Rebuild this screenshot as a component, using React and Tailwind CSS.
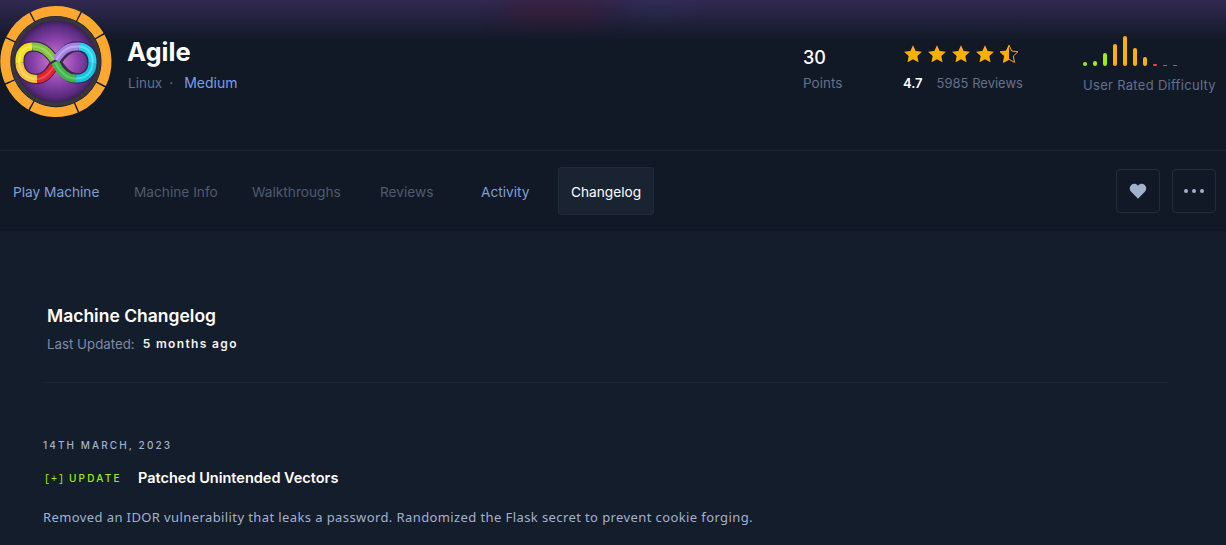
const font = "font-['Inter','Liberation_Sans',sans-serif]";

const STAR = 'M12 1.5l3.2 6.9 7.5.9-5.5 5.2 1.4 7.5L12 18.4l-6.6 3.6 1.4-7.5-5.5-5.2 7.5-.9z';

const bars = [
  { h: 4, c: 'bg-[#9fef00]' },
  { h: 5, c: 'bg-[#9fef00]' },
  { h: 13, c: 'bg-[#9fef00]' },
  { h: 22, c: 'bg-[#ffaf00]' },
  { h: 30, c: 'bg-[#ffaf00]' },
  { h: 18, c: 'bg-[#ffaf00]' },
  { h: 9, c: 'bg-[#ffaf00]' },
  { h: 2, c: 'bg-[#ff3e3e]' },
  { h: 1, c: 'bg-[#ff3e3e]' },
  { h: 1, c: 'bg-[#ff3e3e]' },
];

const tabs = [
  { label: 'Play Machine', c: 'text-[#7f9fd0] w-[125px] pl-[13px]' },
  { label: 'Machine Info', c: 'text-[#4f5a6e] w-[118px] pl-[9px]' },
  { label: 'Walkthroughs', c: 'text-[#4f5a6e] w-[122px] pl-[9px]' },
  { label: 'Reviews', c: 'text-[#4f5a6e] w-[93px] pl-[15px]' },
  { label: 'Activity', c: 'text-[#7f9fd0] w-[100px] pl-[23px]' },
];

// ring gaps read off the reference, degrees clockwise from 12 o'clock
const ringStops = [-28, 27, 60, 117, 156, 209, 246, 295.5, 332];

const infinity = [
  { d: 'M19.5 63C18.5 53 24 46.5 32 46.5', c: '#f2e21c', hi: '#fbf27a' },
  { d: 'M19.5 63C20 73 27 79 37 79', c: '#f9c53c', hi: '#fde08a' },
  { d: 'M32 46.5C42 45.5 49 52 54 60', c: '#86c440', hi: '#b6dd78' },
  { d: 'M37 79C45 79 50 72 54 66', c: '#e3242e', hi: '#f36a70' },
  { d: 'M56 60C62 51 68 45.5 79 46.5', c: '#a583e6', hi: '#d3bff5' },
  { d: 'M55 62C60 72 66 79 76 78.5', c: '#3fb54a', hi: '#7ed586' },
  { d: 'M79 46.5C88 47 93 54 92.5 63', c: '#22d3ee', hi: '#8cecf8' },
  { d: 'M76 78.5C86 79 92.5 72 92.5 63', c: '#12c4dc', hi: '#6fe4f2' },
];

function Logo() {
  const segs = [];
  for (let i = 0; i < 8; i++) {
    const s = ((ringStops[i] - 90 + 0.8) * Math.PI) / 180;
    const e = ((ringStops[i + 1] - 90 - 0.8) * Math.PI) / 180;
    segs.push(
      <path
        key={i}
        d={`M${56 + 50.5 * Math.cos(s)} ${61.5 + 50.5 * Math.sin(s)}A50.5 50.5 0 0 1 ${56 + 50.5 * Math.cos(e)} ${61.5 + 50.5 * Math.sin(e)}`}
        stroke="#fea82f"
        strokeWidth="10"
        fill="none"
      />
    );
  }
  return (
    <svg width="112" height="118" viewBox="0 0 112 118" className="shrink-0">
      <defs>
        <radialGradient id="orb">
          <stop offset="0%" stopColor="#d57fcf" />
          <stop offset="50%" stopColor="#8c44ac" />
          <stop offset="82%" stopColor="#5c2b80" />
          <stop offset="100%" stopColor="#2c1d44" />
        </radialGradient>
      </defs>
      {segs}
      <circle cx="56" cy="61.5" r="43" fill="url(#orb)" stroke="#37363b" strokeWidth="4" />
      <g fill="none">
        <path d="M19.5 63C18.5 53 24 46.5 34 46.5C44 46.5 50 54 56 62C62 71 68 78.5 77 78.5C86 78.5 92.5 72 92.5 63C92.5 54 87 46.5 77 46.5C68 46.5 62 53 56 62C50 71 46 79 36 79C26 79 20 72 19.5 63Z" stroke="#3a2750" strokeWidth="10.5" />
        {infinity.map((p) => (
          <path key={p.d} d={p.d} stroke={p.c} strokeWidth="8" />
        ))}
        {infinity.map((p) => (
          <path key={p.d} d={p.d} stroke={p.hi} strokeWidth="2" opacity="0.6" />
        ))}
      </g>
    </svg>
  );
}

export default function App() {
  return (
    <div className={`${font} relative h-[545px] w-full overflow-hidden bg-[#141d2b]`}>
      <div className="absolute inset-x-0 top-0 h-[40px] bg-[linear-gradient(to_bottom,rgba(72,52,110,0.6),rgba(17,25,39,0))]" />
      <div className="absolute left-[500px] top-0 h-[22px] w-[110px] rounded-b-full bg-[#4a1020] opacity-40 blur-md" />
      <div className="absolute left-[625px] top-0 h-[12px] w-[70px] rounded-b-full bg-[#2a3a70] opacity-30 blur-md" />

      <header className="flex h-[150px] items-start bg-[#111927]">
        <div className="relative flex items-start">
          <Logo />
          <div className="ml-[15px] pt-[37px]">
            <h1 className="text-[25.5px] font-bold leading-[30px] text-white">Agile</h1>
            <div className="mt-[7px] flex items-center text-[13.5px] leading-[18px]">
              <span className="ml-[1px] text-[#5f6f8e]">Linux</span>
              <span className="ml-[7px] text-[#5f6f8e]">·</span>
              <span className="ml-[11px] text-[14px] text-[#7a9fe6]">Medium</span>
            </div>
          </div>
        </div>

        <div className="relative ml-auto flex items-start pt-[36px]">
          <div className="w-[100px]">
            <div className="pt-[11px] text-[18px] font-medium leading-[22px] text-white">30</div>
            <div className="mt-[5px] text-[13.5px] leading-[18px] text-[#647088]">Points</div>
          </div>
          <div className="w-[180px]">
            <div className="flex gap-[4px] pt-[8px]">
              {[0, 1, 2, 3].map((i) => (
                <svg key={i} width="20" height="20" viewBox="0 0 24 24" fill="#ffaf00">
                  <path d={STAR} />
                </svg>
              ))}
              <svg width="20" height="20" viewBox="0 0 24 24">
                <clipPath id="half">
                  <rect x="0" y="0" width="12" height="24" />
                </clipPath>
                <path d={STAR} fill="none" stroke="#ffaf00" strokeWidth="1.2" />
                <path d={STAR} fill="#ffaf00" clipPath="url(#half)" />
              </svg>
            </div>
            <div className="mt-[10px] flex items-center text-[13px] leading-[18px]">
              <span className="font-semibold text-white">4.7</span>
              <span className="ml-[14px] text-[#647088]">5985 Reviews</span>
            </div>
          </div>
          <div className="w-[143px]">
            <div className="flex h-[30px] items-end gap-[6px]">
              {bars.map((b, i) => (
                <div key={i} className={`w-[4px] rounded-[2px] ${b.c}`} style={{ height: b.h }} />
              ))}
            </div>
            <div className="mt-[10px] text-[13px] leading-[18px] tracking-[0.3px] text-[#647088]">User Rated Difficulty</div>
          </div>
        </div>
      </header>

      <nav className="relative flex h-[81px] items-center border-t border-[#1c2533] bg-[#111927] pr-[10px] text-[13.7px]">
        {tabs.map((t) => (
          <div key={t.label} className={`${t.c} pt-[3px]`}>{t.label}</div>
        ))}
        <div className="flex h-[48px] w-[96px] items-center justify-center rounded-[3px] border border-[#1f2a3a] bg-[#1a2332] pt-[2px] text-white">
          Changelog
        </div>
        <div className="ml-auto flex gap-[12px]">
          <div className="flex h-[44px] w-[44px] items-center justify-center rounded-[4px] border border-[#222c3b]">
            <svg width="18" height="16" viewBox="0 0 24 22" fill="#a4b1cd">
              <path d="M12 21.5L2.6 12C-.2 9 .2 4.8 2.8 2.6 5.6.3 9.6.8 12 3.8c2.4-3 6.4-3.5 9.2-1.2 2.6 2.2 3 6.4.2 9.4z" />
            </svg>
          </div>
          <div className="flex h-[44px] w-[44px] items-center justify-center gap-[4px] rounded-[4px] border border-[#222c3b]">
            <span className="h-[4px] w-[4px] rounded-full bg-[#a4b1cd]" />
            <span className="h-[4px] w-[4px] rounded-full bg-[#a4b1cd]" />
            <span className="h-[4px] w-[4px] rounded-full bg-[#a4b1cd]" />
          </div>
        </div>
      </nav>

      <main className="relative pl-[43px] pr-[57px] pt-[74px]">
        <div className="pl-[4px]">
          <h2 className="text-[17.5px] font-semibold leading-[22px] text-white">Machine Changelog</h2>
          <div className="mt-[8px] flex items-center text-[13.3px] leading-[18px]">
            <span className="text-[#7e8ba6]">Last Updated:</span>
            <span className="ml-[8px] text-[12px] font-semibold tracking-[1.35px] text-[#f0f2f6]">5 months ago</span>
          </div>
        </div>
        <div className="mt-[29px] border-t border-[#1a2433]" />

        <div className="mt-[55px] text-[10px] font-medium leading-[14px] tracking-[2.1px] text-[#a4b1cd]">14TH MARCH, 2023</div>
        <div className="mt-[14px] flex items-center">
          <span className="w-[95px] pl-[1px] pt-[2px] text-[10px] font-medium leading-[20px] tracking-[2.2px] text-[#9fef00]">
            <span className="mr-[4px] font-['Liberation_Mono',monospace] tracking-[1px]">[+]</span>UPDATE
          </span>
          <span className="text-[14.5px] font-semibold leading-[20px] text-white">Patched Unintended Vectors</span>
        </div>
        <p className="mt-[17px] font-['Noto_Sans',sans-serif] text-[13px] leading-[20px] tracking-[0.4px] text-[#a4b1cd]">
          Removed an IDOR vulnerability that leaks a password. Randomized the Flask secret to prevent cookie forging.
        </p>
      </main>
    </div>
  );
}
